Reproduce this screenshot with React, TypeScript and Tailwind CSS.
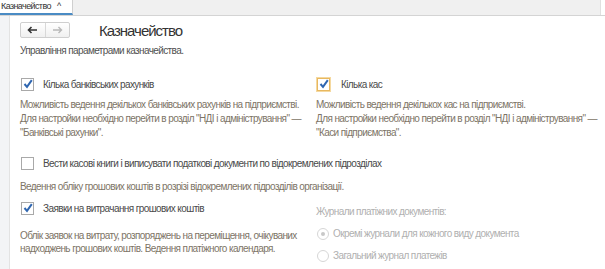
import React from "react";

const Check = () => (
  <svg width="10" height="10" viewBox="0 0 10 10" className="absolute left-[1px] top-[0px]">
    <path d="M1.5 5 L4 7.8 L8.8 1.2" fill="none" stroke="#2f66b0" strokeWidth="2" />
  </svg>
);

function Box({ checked, focus }: { checked?: boolean; focus?: boolean }) {
  return (
    <div
      className={
        "relative w-[13px] h-[13px] shrink-0 bg-white border " +
        (focus ? "border-[#e8b860] shadow-[0_0_0_1px_#f5d9a0]" : "border-[#a9a9a9]")
      }
    >
      {checked && <Check />}
    </div>
  );
}

function Radio({ on }: { on?: boolean }) {
  return (
    <div className="w-[12px] h-[12px] rounded-full border border-[#d6d6d6] bg-white flex items-center justify-center shrink-0">
      {on && <div className="w-[4px] h-[4px] rounded-full bg-[#c8c8c8]" />}
    </div>
  );
}

export default function App() {
  return (
    <div
      className="w-[605px] h-[269px] bg-white overflow-hidden flex flex-col text-[10px] tracking-[-0.6px] text-[#4a4a4a]"
      style={{ fontFamily: '"Liberation Sans", Arial, sans-serif' }}
    >
      <div className="h-[16px] flex bg-[#f0f0f0] border-b border-[#d4d4d4] shrink-0">
        <div className="w-[73px] h-full bg-white border-r border-[#cfcfcf] border-b-2 border-b-[#4a8bc4] flex items-center text-[9px] text-[#333] leading-none whitespace-nowrap">
          <span className="ml-[1px]">Казначейство</span>
          <span className="ml-[6px] text-[9px]">^</span>
        </div>
        <div className="flex-1" />
        <div className="w-[5px] bg-white border-l border-[#e0e0e0]" />
      </div>
      <div className="flex flex-1 min-h-0">
        <div className="w-[10px] bg-[#f3f4f6] border-r border-[#e3e3e3] shrink-0" />
        <div className="flex-1 pl-[10px] pr-[5px] relative">
          <div className="flex items-center mt-[6px] h-[16px]">
            <div className="flex w-[50px] h-[16px] border border-[#cfcfcf] rounded-[2px] bg-gradient-to-b from-white to-[#f0f0f0]">
              <div className="flex-1 flex items-center justify-center border-r border-[#d8d8d8]">
                <svg width="11" height="8" viewBox="0 0 11 8"><path d="M10 4H2M4.5 1 1.5 4l3 3" stroke="#333" strokeWidth="1.6" fill="none" /></svg>
              </div>
              <div className="flex-1 flex items-center justify-center">
                <svg width="11" height="8" viewBox="0 0 11 8"><path d="M1 4h8M6.5 1l3 3-3 3" stroke="#b8b8b8" strokeWidth="1.4" fill="none" /></svg>
              </div>
            </div>
            <div className="ml-[29px] text-[15px] tracking-[-1px] text-[#333] leading-none">Казначейство</div>
          </div>
          <div className="mt-[5px] text-[#505050]">Управління параметрами казначейства.</div>

          <div className="grid grid-cols-[296px_1fr] mt-[20px]">
            <div>
              <div className="flex items-center h-[13px] pl-[1px]">
                <Box checked />
                <span className="ml-[9px] text-[#4a4a4a]">Кілька банківських рахунків</span>
              </div>
              <div className="mt-[7px] text-[#7d7466] leading-[14px]">
                Можливість ведення декількох банківських рахунків на підприємстві.
                <br />
                Для настройки необхідно перейти в розділ "НДІ і адміністрування" —
                <br />
                "Банківські рахунки".
              </div>
            </div>
            <div>
              <div className="flex items-center h-[13px] pl-[1px]">
                <Box checked focus />
                <span className="ml-[11px] text-[#4a4a4a]">Кілька кас</span>
              </div>
              <div className="mt-[7px] text-[#7d7466] leading-[14px]">
                Можливість ведення декількох кас на підприємстві.
                <br />
                Для настройки необхідно перейти в розділ "НДІ і адміністрування" —
                <br />
                "Каси підприємства".
              </div>
            </div>
          </div>

          <div className="flex items-center h-[13px] pl-[1px] mt-[17px]">
            <Box />
            <span className="ml-[9px]">Вести касові книги і виписувати податкові документи по відокремлених підрозділах</span>
          </div>
          <div className="mt-[9px] text-[#7d7466]">Ведення обліку грошових коштів в розрізі відокремлених підрозділів організації.</div>

          <div className="grid grid-cols-[296px_1fr] mt-[8px]">
            <div>
              <div className="flex items-center h-[13px] pl-[1px]">
                <Box checked />
                <span className="ml-[9px]">Заявки на витрачання грошових коштів</span>
              </div>
              <div className="mt-[14px] text-[#7d7466] leading-[13px]">
                Облік заявок на витрату, розпоряджень на переміщення, очікуваних
                <br />
                надходжень грошових коштів. Ведення платіжного календаря.
              </div>
            </div>
            <div className="pt-[2px]">
              <div className="text-[#b0b0b0]">Журнали платіжних документів:</div>
              <div className="flex items-center mt-[7px] pl-[1px]">
                <Radio on />
                <span className="ml-[4px] text-[#b0b0b0]">Окремі журнали для кожного виду документа</span>
              </div>
              <div className="flex items-center mt-[7px] pl-[1px]">
                <Radio />
                <span className="ml-[4px] text-[#b0b0b0]">Загальний журнал платежів</span>
              </div>
            </div>
          </div>
        </div>
      </div>
    </div>
  );
}
